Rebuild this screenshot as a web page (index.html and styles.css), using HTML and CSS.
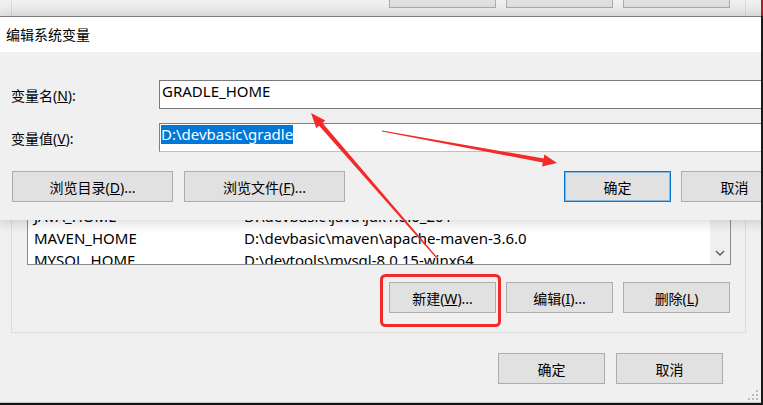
FILE: index.html
```html
<!DOCTYPE html>
<html lang="zh-CN">

<head>
    <meta charset="UTF-8">
    <meta name="viewport" content="width=device-width, initial-scale=1.0">
    <title>编辑系统变量</title>
    <link rel="stylesheet" href="styles.css">
</head>

<body>
    <div class="screen">
        <!-- 背景窗口：环境变量 -->
        <div class="env-window">
            <div class="group-box">
                <div class="button-row upper">
                    <button class="win-btn">新建(<u>N</u>)...</button>
                    <button class="win-btn">编辑(<u>E</u>)...</button>
                    <button class="win-btn">删除(<u>D</u>)</button>
                </div>
                <div class="var-list">
                    <div class="var-rows">
                        <div class="var-row"><span class="var-name">JAVA_HOME</span><span>D:\devbasic\java\jdk1.8.0_201</span></div>
                        <div class="var-row"><span class="var-name">MAVEN_HOME</span><span>D:\devbasic\maven\apache-maven-3.6.0</span></div>
                        <div class="var-row"><span class="var-name">MYSQL_HOME</span><span>D:\devtools\mysql-8.0.15-winx64</span></div>
                    </div>
                    <div class="scrollbar">
                        <div class="scroll-arrow">
                            <svg width="10" height="6" viewBox="0 0 10 6">
                                <polyline points="1,1 5,5 9,1" fill="none" stroke="#606060" stroke-width="1.5" />
                            </svg>
                        </div>
                    </div>
                </div>
                <div class="button-row main-actions">
                    <button class="win-btn">新建(<u>W</u>)...</button>
                    <button class="win-btn">编辑(<u>I</u>)...</button>
                    <button class="win-btn">删除(<u>L</u>)</button>
                </div>
            </div>
            <div class="footer-row">
                <button class="win-btn">确定</button>
                <button class="win-btn">取消</button>
            </div>
            <div class="bottom-edge"></div>
            <svg class="size-grip" width="10" height="10" viewBox="0 0 10 10">
                <rect x="8" y="0" width="2" height="2" fill="#bdbdbd" />
                <rect x="4" y="4" width="2" height="2" fill="#bdbdbd" />
                <rect x="8" y="4" width="2" height="2" fill="#bdbdbd" />
                <rect x="0" y="8" width="2" height="2" fill="#bdbdbd" />
                <rect x="4" y="8" width="2" height="2" fill="#bdbdbd" />
                <rect x="8" y="8" width="2" height="2" fill="#bdbdbd" />
            </svg>
        </div>

        <!-- 前景对话框 -->
        <div class="dialog">
            <div class="dialog-title">编辑系统变量</div>
            <div class="dialog-body">
                <div class="field-row">
                    <label class="field-label">变量名(<u>N</u>):</label>
                    <div class="text-input">GRADLE_HOME</div>
                </div>
                <div class="field-row second">
                    <label class="field-label">变量值(<u>V</u>):</label>
                    <div class="text-input focused"><span class="selected-text">D:\devbasic\gradle</span></div>
                </div>
                <div class="dialog-buttons">
                    <button class="win-btn wide">浏览目录(<u>D</u>)...</button>
                    <button class="win-btn wide">浏览文件(<u>F</u>)...</button>
                    <button class="win-btn default">确定</button>
                    <button class="win-btn">取消</button>
                </div>
            </div>
        </div>

        <div class="screen-edge"></div>

        <!-- 红色标注 -->
        <svg class="annotations" width="763" height="405" viewBox="0 0 763 405">
            <rect x="381.5" y="275.5" width="118" height="50" rx="4" fill="none" stroke="#f42a2a" stroke-width="3" />
            <polygon points="382.1,130.4 543.6,158.5 544.3,154.6 557,163 542.1,166.4 542.8,162.5 381.9,131.6" fill="#f42a2a" />
            <polygon points="437.5,257.6 322.5,122.9 325.3,120.4 311,113 316.3,128.2 319.1,125.7 436.5,258.4" fill="#f42a2a" />
        </svg>
    </div>
</body>

</html>
```

FILE: styles.css
```css
html,
body {
    margin: 0;
    padding: 0;
}

body {
    font-family: "Noto Sans", "Noto Sans CJK SC", sans-serif;
    color: #000;
}

.screen {
    position: relative;
    width: 763px;
    height: 405px;
    overflow: hidden;
    background-color: #f0f0f0;
}

/* 背景窗口 */
.env-window {
    display: flex;
    flex-direction: column;
    height: 405px;
}

.group-box {
    width: 735px;
    box-sizing: border-box;
    margin: -40px 0 0 11px;
    padding: 16px 15px 19px 0;
    border: 1px solid #dcdcdc;
}

.button-row {
    display: flex;
    justify-content: flex-end;
    gap: 10px;
}

.win-btn {
    width: 107px;
    height: 31px;
    box-sizing: border-box;
    padding: 0;
    border: 1px solid #adadad;
    background-color: #e1e1e1;
    font: inherit;
    font-size: 14px;
    color: #000;
    white-space: nowrap;
}

/* 上方被遮住的按钮，文字略微上移 */
.button-row.upper .win-btn {
    padding-bottom: 3px;
}

.var-list {
    display: flex;
    width: 704px;
    height: 245px;
    box-sizing: border-box;
    margin: 12px 0 0 15px;
    border: 1px solid #8c8c8c;
    background-color: #fff;
}

.var-rows {
    flex: 1;
    overflow: hidden;
    padding-top: 184px;
    font-size: 15px;
    line-height: 22px;
}

.var-row {
    display: flex;
    padding-left: 6px;
    white-space: nowrap;
}

.var-name {
    width: 210px;
}

.scrollbar {
    width: 20px;
    display: flex;
    flex-direction: column;
    justify-content: flex-end;
    background-color: #f0f0f0;
}

.scroll-arrow {
    height: 22px;
    display: flex;
    align-items: center;
    justify-content: center;
}

.main-actions {
    margin-top: 17px;
}

.footer-row {
    display: flex;
    justify-content: flex-end;
    gap: 11px;
    margin-top: 20px;
    padding-right: 40px;
}

.bottom-edge {
    margin-top: auto;
    height: 2px;
    border-top: 1px solid #c6c6c6;
    background-color: #151515;
}

.size-grip {
    position: absolute;
    right: 5px;
    bottom: 5px;
}

/* 对话框 */
.dialog {
    position: absolute;
    top: 16px;
    left: -2px;
    width: 820px;
    height: 204px;
    box-sizing: border-box;
    border-top: 1px solid #7a7a7a;
    background-color: #f0f0f0;
    box-shadow: 0 0 14px rgba(0, 0, 0, 0.22);
}

.dialog-title {
    height: 35px;
    padding-left: 8px;
    background-color: #fff;
    font-size: 14px;
    line-height: 35px;
}

.dialog-body {
    padding: 28px 0 0 13px;
}

.field-row {
    display: flex;
    align-items: center;
}

.field-row.second {
    margin-top: 14px;
}

.field-label {
    flex: none;
    width: 148px;
    font-size: 14px;
}

.text-input {
    flex: 1;
    height: 29px;
    box-sizing: border-box;
    padding: 1px 2px;
    border: 1px solid #7a7a7a;
    background-color: #fff;
    font-size: 15px;
    line-height: 19px;
    white-space: nowrap;
}

.text-input.focused {
    border-color: #4b8ccc #4b8ccc #9fc6eb;
    padding-left: 1px;
}

.selected-text {
    display: inline-block;
    height: 19px;
    background-color: #0078d7;
    color: #fff;
}

.dialog-buttons {
    display: flex;
    gap: 11px;
    margin-top: 19px;
    padding-left: 1px;
}

.win-btn.wide {
    width: 161px;
}

.win-btn.default {
    margin-left: 208px;
    margin-right: -1px;
    border-color: #0078d7;
    box-shadow: inset 0 0 0 1px rgba(0, 120, 215, 0.4);
}

.screen-edge {
    position: absolute;
    top: 0;
    right: 0;
    width: 2px;
    height: 405px;
    background: linear-gradient(#a82222 0 16px, #1a1a1a 16px);
}

.annotations {
    position: absolute;
    top: 0;
    left: 0;
    pointer-events: none;
}
```
